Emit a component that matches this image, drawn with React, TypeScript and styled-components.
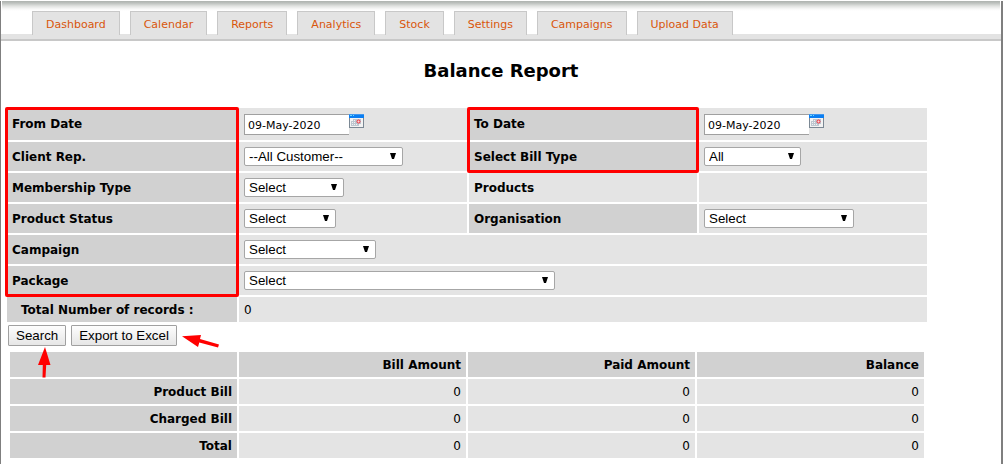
import React from "react";
import styled, { createGlobalStyle } from "styled-components";

const GlobalStyle = createGlobalStyle`
  *, *::before, *::after { box-sizing: border-box; }
  body {
    margin: 0;
    background: #fff;
    color: #000;
    font-family: Verdana, "DejaVu Sans", sans-serif;
    font-size: 11px;
  }
`;

const Page = styled.div`
  min-height: 100vh;
  border-left: 1px solid #7f7f7f;
  border-right: 2px solid #7f7f7f;
`;

const HeaderShadow = styled.div`
  height: 10px;
  margin: 1px 1px 0;
  background: linear-gradient(#aeb3af, #bcc0bd 2px, #e0e2e0 5px, #f8f8f8 8px, #fff);
`;

const TabBar = styled.nav`
  display: flex;
  gap: 10px;
  height: 30px;
  padding-left: 31px;
  border-bottom: 2px solid #c8c8c8;
  background: linear-gradient(#fff, #fff) top / 100% 23px no-repeat #e3e3e3;
`;

const Tab = styled.a`
  height: 24px;
  padding: 0 13px;
  border: 1px solid #c8c8c8;
  border-bottom: 0;
  background: #e3e3e3;
  color: #d9560b;
  line-height: 25px;
  text-decoration: none;
  white-space: nowrap;
`;

const Title = styled.h1`
  margin: 18px 0 26px;
  font-size: 18px;
  line-height: 23px;
  text-align: center;
`;

const Report = styled.main`
  width: 92%;
  margin-left: 6px;
`;

const Fields = styled.div`
  position: relative;
  display: grid;
  grid-template-columns: 25% repeat(3, minmax(0, 1fr));
  grid-template-rows: 32px repeat(5, 29px) 25px;
  gap: 2px;
`;

const Label = styled.label<{ $light?: boolean; $indent?: boolean }>`
  display: flex;
  align-items: center;
  padding-left: ${(p) => (p.$indent ? 14 : 5)}px;
  background: ${(p) => (p.$light ? "#e4e4e4" : "#d1d1d1")};
  font-size: 12px;
  font-weight: bold;
`;

const Value = styled.div<{ $span?: number }>`
  display: flex;
  align-items: center;
  grid-column: span ${(p) => p.$span ?? 1};
  padding-left: 5px;
  background: #e4e4e4;
  font-size: 12px;
`;

const DateInput = styled.input`
  width: 105px;
  height: 21px;
  padding: 2px 3px 0;
  border: 1px solid #a0a0a0;
  border-right: 0;
  border-radius: 0;
  background: #fff;
  font: 11px Verdana, "DejaVu Sans", sans-serif;
`;

const CalendarButton = styled.button`
  display: flex;
  align-self: flex-start;
  margin-top: 6px;
  padding: 0;
  border: 0;
  background: none;
`;

const SelectBox = styled.span<{ $width: number }>`
  position: relative;
  display: block;
  width: ${(p) => p.$width}px;
  height: 19px;
`;

const NativeSelect = styled.select`
  appearance: none;
  display: block;
  width: 100%;
  height: 19px;
  padding: 0 4px;
  border: 1px solid #a6a6a6;
  border-radius: 2px;
  background: #fff;
  color: #000;
  font-family: Arial, "Liberation Sans", sans-serif;
`;

const SelectArrow = styled.svg`
  position: absolute;
  top: 6px;
  right: 7px;
  pointer-events: none;
`;

const Highlight = styled.div<{ $column: number; $lastRow: number }>`
  position: absolute;
  inset: -1px -2px -2px;
  grid-column: ${(p) => p.$column} / ${(p) => p.$column + 1};
  grid-row: 1 / ${(p) => p.$lastRow + 1};
  border: 3px solid #ff0000;
  border-radius: 2px;
  pointer-events: none;
`;

const Actions = styled.div`
  position: relative;
  display: flex;
  gap: 5px;
  padding: 3px 1px 4px;
`;

const ActionButton = styled.button`
  height: 21px;
  padding: 0 7px;
  border: 1px solid #a0a0a0;
  border-radius: 1px;
  background: linear-gradient(#fdfdfd, #e6e6e6);
  color: #000;
  font-family: Arial, "Liberation Sans", sans-serif;
  white-space: nowrap;
`;

const Pointers = styled.svg`
  position: absolute;
  top: 0;
  left: 0;
  pointer-events: none;
`;

const TotalsWrap = styled.div`
  padding: 0 1px;
`;

const Totals = styled.table`
  width: 100%;
  table-layout: fixed;
  border-spacing: 2px;
  font-size: 12px;
`;

const HeadCell = styled.th`
  height: 25px;
  padding: 0 5px;
  background: #d1d1d1;
  text-align: right;
`;

const Cell = styled.td`
  height: 25px;
  padding: 0 5px;
  background: #e4e4e4;
  text-align: right;
`;

const tabs = ["Dashboard", "Calendar", "Reports", "Analytics", "Stock", "Settings", "Campaigns", "Upload Data"];

function CalendarIcon() {
  return (
    <svg width="15" height="14" viewBox="0 0 15 14" shapeRendering="crispEdges" aria-hidden="true">
      <path fill="#7b8894" d="M0 0h15v14H0z" />
      <path fill="#f3f3f3" d="M1 4h13v9H1z" />
      <path fill="#0b7ef2" d="M0 1h15v3H0z" />
      <path fill="#3f97ee" d="M0 0h15v1H0z" />
      <path fill="#6fdcff" d="M1 1h2v1H1zM4 1h1v1H4z" />
      <path fill="#bcc6d0" d="M4 5h8v5h-2v2H2V7h2z" />
      <path fill="#f3f3f3" d="M5 6h1v1H5zM3 8h1v1H3zM5 8h1v1H5zM3 10h1v1H3zM5 10h1v1H5zM7 10h1v1H7z" />
      <circle cx="9.5" cy="7.5" r="1.5" fill="#ffdada" stroke="#f02f3a" shapeRendering="auto" />
    </svg>
  );
}

function DateField({ id }: { id: string }) {
  return (
    <Value>
      <DateInput id={id} type="text" defaultValue="09-May-2020" />
      <CalendarButton type="button" aria-label="Choose date">
        <CalendarIcon />
      </CalendarButton>
    </Value>
  );
}

function SelectField({ id, width, option = "Select", span }: { id: string; width: number; option?: string; span?: number }) {
  return (
    <Value $span={span}>
      <SelectBox $width={width}>
        <NativeSelect id={id}>
          <option>{option}</option>
        </NativeSelect>
        <SelectArrow width="6" height="6" viewBox="0 0 6 6" aria-hidden="true">
          <path d="M0 0h6L4 6H2z" />
        </SelectArrow>
      </SelectBox>
    </Value>
  );
}

export default function App() {
  return (
    <>
      <GlobalStyle />
      <Page>
        <HeaderShadow />
        <TabBar>
          {tabs.map((tab) => (
            <Tab key={tab} href="#">
              {tab}
            </Tab>
          ))}
        </TabBar>
        <Title>Balance Report</Title>
        <Report>
          <Fields>
            <Label htmlFor="from">From Date</Label>
            <DateField id="from" />
            <Label htmlFor="to">To Date</Label>
            <DateField id="to" />

            <Label htmlFor="client">Client Rep.</Label>
            <SelectField id="client" width={159} option="--All Customer--" />
            <Label htmlFor="bill">Select Bill Type</Label>
            <SelectField id="bill" width={97} option="All" />

            <Label htmlFor="membership">Membership Type</Label>
            <SelectField id="membership" width={100} />
            <Label as="span" $light>
              Products
            </Label>
            <Value />

            <Label htmlFor="status">Product Status</Label>
            <SelectField id="status" width={92} />
            <Label htmlFor="organisation">Organisation</Label>
            <SelectField id="organisation" width={150} />

            <Label htmlFor="campaign">Campaign</Label>
            <SelectField id="campaign" width={132} span={3} />

            <Label htmlFor="package">Package</Label>
            <SelectField id="package" width={311} span={3} />

            <Label as="span" $indent>
              Total Number of records :
            </Label>
            <Value $span={3}>0</Value>

            <Highlight $column={1} $lastRow={6} />
            <Highlight $column={3} $lastRow={2} />
          </Fields>

          <Actions>
            <ActionButton type="button">Search</ActionButton>
            <ActionButton type="button">Export to Excel</ActionButton>
            <Pointers width="216" height="58" viewBox="0 0 216 58" fill="#ff0000" aria-hidden="true">
              <path d="M38 25L43.500 43H39.200L38.500 55.500H35.500L35.800 43H31z" />
              <path d="M175 14.300L194 13L193 17L212 22.500L211 25.500L192.300 20.500L191 25z" />
            </Pointers>
          </Actions>

          <TotalsWrap>
            <Totals>
              <thead>
                <tr>
                  <HeadCell as="td" />
                  <HeadCell scope="col">Bill Amount</HeadCell>
                  <HeadCell scope="col">Paid Amount</HeadCell>
                  <HeadCell scope="col">Balance</HeadCell>
                </tr>
              </thead>
              <tbody>
                {["Product Bill", "Charged Bill", "Total"].map((name) => (
                  <tr key={name}>
                    <HeadCell scope="row">{name}</HeadCell>
                    <Cell>0</Cell>
                    <Cell>0</Cell>
                    <Cell>0</Cell>
                  </tr>
                ))}
              </tbody>
            </Totals>
          </TotalsWrap>
        </Report>
      </Page>
    </>
  );
}
